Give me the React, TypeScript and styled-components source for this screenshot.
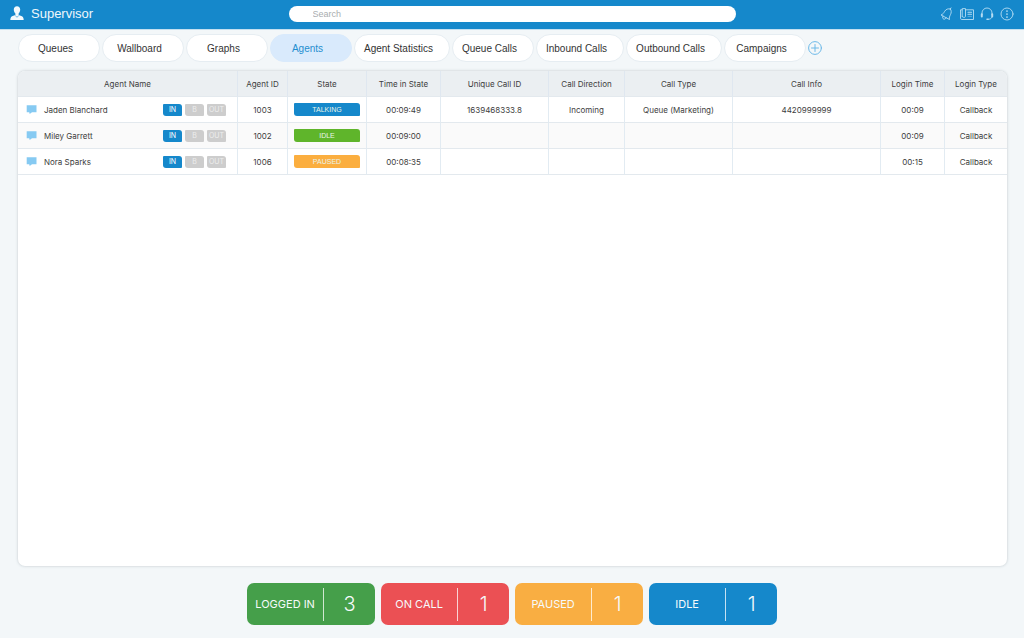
import React from "react";
import styled, { createGlobalStyle } from "styled-components";

const blue = "#1588cb";

const GlobalStyle = createGlobalStyle`
  * { box-sizing: border-box; }
  body {
    margin: 0;
    background: #f3f7f9;
    color: #3d3d3d;
    font-family: "Liberation Sans", Arial, sans-serif;
  }
  button, input { font-family: inherit; }
`;

const Page = styled.div`
  display: flex;
  flex-direction: column;
  min-height: 100vh;
`;

const TopBar = styled.header`
  display: grid;
  grid-template-columns: 1fr minmax(160px, 447px) 1fr;
  align-items: center;
  height: 30px;
  padding: 0 10px 2px;
  background: ${blue};
  border-bottom: 1px solid #c3dff0;
`;

const Brand = styled.div`
  display: flex;
  align-items: center;
  gap: 7px;
`;

const BrandName = styled.h1`
  margin: 0;
  color: #eef7fc;
  font-size: 13px;
  line-height: 16px;
  font-weight: 400;
`;

const SearchInput = styled.input`
  width: 100%;
  height: 16px;
  padding: 0 24px;
  border: 0;
  border-radius: 8px;
  background: #fff;
  color: #3d3d3d;
  font-size: 9px;
  outline: none;
  &::placeholder { color: #a9adaf; opacity: 1; }
`;

const Actions = styled.div`
  display: flex;
  justify-content: flex-end;
  gap: 6px;
`;

const IconButton = styled.button<{ $color?: string }>`
  display: flex;
  padding: 0;
  border: 0;
  background: none;
  color: ${(p) => p.$color ?? "#b4dcf3"};
  cursor: pointer;
`;

const Tabs = styled.nav`
  display: flex;
  align-items: center;
  gap: 2px;
  padding: 4px 18px 9px;
`;

const Tab = styled.button<{ $active?: boolean }>`
  min-width: 82px;
  height: 28px;
  padding: 0 16px 0 9px;
  border: 1px solid ${(p) => (p.$active ? "#d9eafc" : "#e6edf2")};
  border-radius: 14px;
  background: ${(p) => (p.$active ? "#d9eafc" : "#fff")};
  color: ${(p) => (p.$active ? "#1f8ed0" : "#333")};
  font-size: 10px;
  white-space: nowrap;
  cursor: pointer;
`;

const Panel = styled.main`
  flex: 1;
  margin: 0 17px 0 18px;
  overflow: hidden;
  border-radius: 7px;
  background: #fff;
  box-shadow: 0 0 3px rgba(60, 80, 90, 0.28);
`;

const Table = styled.table`
  width: 100%;
  table-layout: fixed;
  border-collapse: separate;
  border-spacing: 0;
  font-family: Inter, "Liberation Sans", sans-serif;
  font-size: 8px;
`;

const HeadCell = styled.th`
  height: 26px;
  padding: 0;
  background: #ebeff2;
  border-right: 1px solid #dfe7f0;
  border-bottom: 1px solid #e3e9ee;
  font-weight: 400;
  text-align: center;
  &:last-child { border-right: 0; }
`;

const Row = styled.tr`
  &:nth-child(even) { background: #fafafa; }
`;

const Cell = styled.td`
  height: 26px;
  padding: 0 6px;
  border-right: 1px solid #e2ebf2;
  border-bottom: 1px solid #e3e9ee;
  text-align: center;
  white-space: nowrap;
  &:last-child { border-right: 0; }
`;

const Agent = styled.div`
  display: flex;
  align-items: center;
  gap: 7px;
  padding: 0 5px 0 2px;
`;

const AgentName = styled.span`
  flex: 1;
  text-align: left;
`;

const Directions = styled.span`
  display: flex;
  gap: 3px;
`;

const Direction = styled.button<{ $on?: boolean }>`
  width: 19px;
  height: 12px;
  padding: 0;
  border: 0;
  border-radius: 1px 3px 1px 3px;
  background: ${(p) => (p.$on ? blue : "#cdcdcd")};
  color: ${(p) => (p.$on ? "#fff" : "#eee")};
  font-size: 7px;
  line-height: 12px;
  cursor: pointer;
`;

const State = styled.div<{ $color: string }>`
  height: 13px;
  border-radius: 1px 3px 1px 3px;
  background: ${(p) => p.$color};
  color: #e9f4e8;
  font-family: "Liberation Sans", sans-serif;
  font-size: 7px;
  line-height: 13px;
`;

const Summary = styled.footer`
  display: flex;
  justify-content: center;
  flex-wrap: wrap;
  gap: 6px;
  padding: 17px 0 13px;
`;

const Counter = styled.section<{ $color: string }>`
  display: flex;
  align-items: center;
  width: 128px;
  height: 42px;
  border-radius: 7px;
  background: ${(p) => p.$color};
  color: #f6fafb;
`;

const CounterLabel = styled.span`
  flex: 3;
  font-family: Inter, "Liberation Sans", sans-serif;
  font-size: 11px;
  text-align: center;
  white-space: nowrap;
`;

const CounterValue = styled.span`
  flex: 2;
  border-left: 1px solid rgba(255, 255, 255, 0.75);
  font-family: Inter, "Liberation Sans", sans-serif;
  font-size: 20px;
  font-weight: 300;
  line-height: 33px;
  text-align: center;
`;

const stroke = { fill: "none", stroke: "currentColor", strokeLinecap: "round", strokeLinejoin: "round" } as const;

const UserIcon = () => (
  <svg width="14" height="15" viewBox="0 0 14 15" fill="#f4fafd" aria-hidden="true">
    <path d="M7 .3c2 0 3.200 1.400 3.200 3.300 0 1.700-.7 3.200-1.600 4v1.100c.5.900 3.400 1 4.300 2.300.5.700.7 1.700.8 3.100H.3c.1-1.400.3-2.400.8-3.100.9-1.300 3.800-1.400 4.300-2.300V7.600c-.9-.8-1.600-2.300-1.600-4C3.800 1.700 5 .3 7 .3z" />
    <path d="M5 9.300l2 2 2-2" fill="none" stroke={blue} strokeWidth=".6" />
  </svg>
);

const BellIcon = () => (
  <svg width="14" height="14" viewBox="0 0 14 14" {...stroke} strokeWidth=".9" aria-hidden="true">
    <path d="M10.300 2C8 1.300 5.900 2.300 4.700 4.300 3.700 6 3 7.200 1 8l8.500 4.500c-.5-2 .2-3.300 1-4.900C11.500 5.600 11.600 3.400 10.300 2zM10.300 2l.7-1.100M3 9.100c-.8 1.400-.3 2.500.6 2.900.9.400 1.900.1 2.600-1.200" />
  </svg>
);

const NewsIcon = () => (
  <svg width="14" height="14" viewBox="0 0 14 14" {...stroke} strokeWidth=".9" aria-hidden="true">
    <path d="M5.500 2.800h8v9.700H1.800c-.8 0-1.300-.5-1.300-1.300V2.800h1.700M2.200 9.500V1.600h3.300v7.900c0 1.200-3.300 1.200-3.300 0" />
    <path d="M8 5.200h3.500M8 7.300h3.500" strokeWidth="1.100" />
    <path d="M8 9.400h3.500" opacity=".5" />
  </svg>
);

const HeadsetIcon = () => (
  <svg width="14" height="14" viewBox="0 0 14 14" {...stroke} aria-hidden="true">
    <path d="M2 7.500V6a5 5 0 0 1 10 0v1.500M12 10c-.4 1.400-1.600 2.200-3.600 2.300" strokeWidth=".9" />
    <path d="M1.800 7.200v2.300M12.200 7.200v2.300" strokeWidth="2" />
    <path d="M7 12.300h1" strokeWidth="1.500" />
  </svg>
);

const MoreIcon = () => (
  <svg width="14" height="14" viewBox="0 0 14 14" {...stroke} aria-hidden="true">
    <circle cx="7" cy="7" r="6" strokeWidth=".9" />
    <path d="M7 4v.1M7 7v.1M7 10v.1" strokeWidth="1.700" />
  </svg>
);

const PlusIcon = () => (
  <svg width="14" height="14" viewBox="0 0 14 14" {...stroke} aria-hidden="true">
    <circle cx="7" cy="7" r="6.400" />
    <path d="M7 3.500v7M3.500 7h7" />
  </svg>
);

const ChatIcon = () => (
  <svg width="11" height="9" viewBox="0 0 11 9" fill="#86caf2" aria-hidden="true">
    <path d="M.7.300h9.800v6.900H6L3.700 8.900 3.200 7.200H.7z" />
  </svg>
);

const tabs = [
  "Queues", "Wallboard", "Graphs", "Agents", "Agent Statistics",
  "Queue Calls", "Inbound Calls", "Outbound Calls", "Campaigns",
];

const columns: [string, number][] = [
  ["Agent Name", 220], ["Agent ID", 50], ["State", 79], ["Time in State", 74],
  ["Unique Call ID", 108], ["Call Direction", 76], ["Call Type", 108],
  ["Call Info", 148], ["Login Time", 64], ["Login Type", 62],
];

const Column = styled.col<{ $width: number }>`
  width: ${(p) => p.$width}px;
`;

const agents = [
  { name: "Jaden Blanchard", id: "1003", state: "TALKING", color: blue,
    rest: ["00:09:49", "1639468333.8", "Incoming", "Queue (Marketing)", "4420999999", "00:09", "Callback"] },
  { name: "Miley Garrett", id: "1002", state: "IDLE", color: "#5fb52b",
    rest: ["00:09:00", "", "", "", "", "00:09", "Callback"] },
  { name: "Nora Sparks", id: "1006", state: "PAUSED", color: "#fbae3f",
    rest: ["00:08:35", "", "", "", "", "00:15", "Callback"] },
];

const counters = [
  { label: "LOGGED IN", value: 3, color: "#459f4a" },
  { label: "ON CALL", value: 1, color: "#eb5054" },
  { label: "PAUSED", value: 1, color: "#f9ae42" },
  { label: "IDLE", value: 1, color: blue },
];

export default function App() {
  return (
    <Page>
      <GlobalStyle />
      <TopBar>
        <Brand>
          <UserIcon />
          <BrandName>Supervisor</BrandName>
        </Brand>
        <SearchInput type="search" placeholder="Search" aria-label="Search" />
        <Actions>
          <IconButton aria-label="Notifications"><BellIcon /></IconButton>
          <IconButton aria-label="News"><NewsIcon /></IconButton>
          <IconButton aria-label="Support"><HeadsetIcon /></IconButton>
          <IconButton aria-label="More"><MoreIcon /></IconButton>
        </Actions>
      </TopBar>
      <Tabs>
        {tabs.map((t) => (
          <Tab key={t} $active={t === "Agents"}>{t}</Tab>
        ))}
        <IconButton $color="#6db9e8" aria-label="Add tab"><PlusIcon /></IconButton>
      </Tabs>
      <Panel>
        <Table>
          <colgroup>
            {columns.map(([name, width]) => <Column key={name} $width={width} />)}
          </colgroup>
          <thead>
            <tr>{columns.map(([name]) => <HeadCell key={name} scope="col">{name}</HeadCell>)}</tr>
          </thead>
          <tbody>
            {agents.map((a) => (
              <Row key={a.id}>
                <Cell>
                  <Agent>
                    <ChatIcon />
                    <AgentName>{a.name}</AgentName>
                    <Directions>
                      <Direction $on>IN</Direction>
                      <Direction>B</Direction>
                      <Direction>OUT</Direction>
                    </Directions>
                  </Agent>
                </Cell>
                <Cell>{a.id}</Cell>
                <Cell><State $color={a.color}>{a.state}</State></Cell>
                {a.rest.map((value, i) => <Cell key={i}>{value}</Cell>)}
              </Row>
            ))}
          </tbody>
        </Table>
      </Panel>
      <Summary>
        {counters.map((c) => (
          <Counter key={c.label} $color={c.color}>
            <CounterLabel>{c.label}</CounterLabel>
            <CounterValue>{c.value}</CounterValue>
          </Counter>
        ))}
      </Summary>
    </Page>
  );
}
